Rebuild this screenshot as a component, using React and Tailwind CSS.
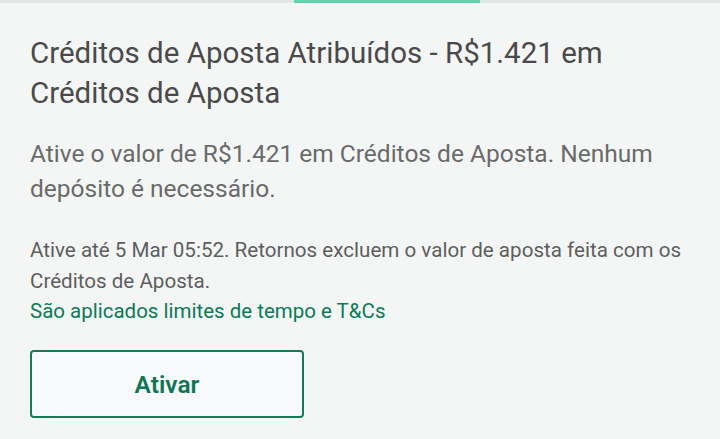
import React from 'react';

const App = () => {
  return (
    <div className="w-[720px] h-[439px] overflow-hidden bg-[#f4f6f6] font-['Roboto',sans-serif]">
      {/* tab indicator */}
      <div className="h-[3px] bg-[#e4e6e6] flex">
        <div className="ml-[294px] w-[186px] bg-[#5fd3aa]" />
      </div>

      <div className="px-[30px] pt-[30px]">
        <h2 className="text-[29.5px] leading-[40px] text-[#4a4a4a] font-normal">
          Créditos de Aposta Atribuídos - R$1.421 em Créditos de Aposta
        </h2>
        <p className="mt-[23px] text-[24.5px] leading-[35px] text-[#6a6a6a] pr-[30px]">
          Ative o valor de R$1.421 em Créditos de Aposta. Nenhum depósito é necessário.
        </p>
        <p className="mt-[29px] text-[20.6px] leading-[30.5px] text-[#5e5e5e]">
          Ative até 5 Mar 05:52. Retornos excluem o valor de aposta feita com os Créditos de Aposta.
        </p>
        <a className="block text-[20.5px] leading-[30.5px] text-[#0b7a57]">
          São aplicados limites de tempo e T&amp;Cs
        </a>
        <button className="mt-[23px] w-[274px] h-[68px] rounded-[4px] border-2 border-[#137a5c] bg-[#f7f9fa] pt-[3px] text-[24.5px] font-semibold text-[#0f7552]">
          Ativar
        </button>
      </div>
    </div>
  );
};

export default App;
